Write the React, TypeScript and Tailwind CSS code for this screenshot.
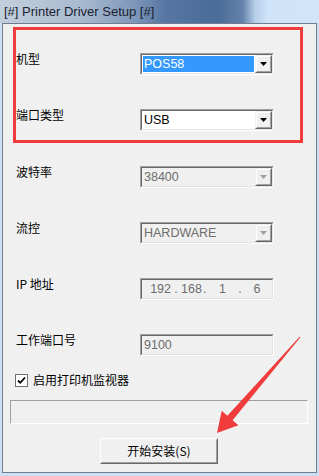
import React from 'react';

const latin = "font-['Liberation_Sans',Arial,sans-serif]";
const cjk = "font-['Noto_Sans_CJK_SC','Liberation_Sans',sans-serif]";

const Arrow = ({ disabled }: { disabled?: boolean }) => (
  <svg width="7" height="4" viewBox="0 0 7 4">
    <path d="M0 0h7L3.5 4z" fill={disabled ? '#a0a0a0' : '#000'} />
  </svg>
);

// classic sunken 3D edge
const Sunken = ({ className, children }: { className?: string; children: React.ReactNode }) => (
  <div className={`border-t-[#a0a0a0] border-l-[#a0a0a0] border-b-white border-r-white border ${className ?? ''}`}>
    <div className="h-full w-full border border-t-[#696969] border-l-[#696969] border-b-[#e3e3e3] border-r-[#e3e3e3]">
      {children}
    </div>
  </div>
);

const Combo = ({ value, selected, disabled }: { value: string; selected?: boolean; disabled?: boolean }) => (
  <Sunken className="w-[134px] h-[22px]">
    <div className={`flex h-full ${disabled ? 'bg-[#f0f0f0]' : 'bg-white'}`}>
      <div className="flex-1 p-[1px]">
        <div
          className={`h-full pl-[1px] flex items-center text-[12.5px] ${latin} ${
            selected ? 'bg-[#3399ff] text-white' : disabled ? 'text-[#6d6d6d]' : 'text-black'
          }`}
        >
          {value}
        </div>
      </div>
      <div className="w-[17px] h-full border border-t-[#f0f0f0] border-l-[#f0f0f0] border-b-[#696969] border-r-[#696969] bg-[#f0f0f0]">
        <div className="h-full w-full border border-t-white border-l-white border-b-[#a0a0a0] border-r-[#a0a0a0] flex items-center justify-center">
          <Arrow disabled={disabled} />
        </div>
      </div>
    </div>
  </Sunken>
);

const Row = ({ label, className, children }: { label: string; className?: string; children: React.ReactNode }) => (
  <div className={`flex items-start h-[22px] ${className ?? ''}`}>
    <div className={`w-[124px] text-[12px] leading-[12px] text-black ${cjk}`}>{label}</div>
    {children}
  </div>
);

export default function App() {
  return (
    <div className="relative w-[319px] h-[476px] overflow-hidden bg-[#cddff3]">
      {/* Title bar */}
      <div className="h-[23px] flex items-center pl-[4px] bg-[linear-gradient(90deg,#c2cfdd_0%,#a9bbd0_25%,#7f98ba_42%,#5675a2_52%,#4b6b99_68%,#6381aa_76%,#b7cfea_80%,#cfe4f9_84%,#d2e6fa_100%)]">
        <span className={`text-[13px] leading-[13px] text-[#1b2230] ${latin}`}>[#] Printer Driver Setup [#]</span>
      </div>

      {/* Client area */}
      <div className="ml-[2px] w-[315px] h-[450px] border border-[#6f7d8e] bg-[#f0f0f0]">
        <div className="pl-[13px] pt-[29px]">
          <Row label="机型">
            <Combo value="POS58" selected />
          </Row>
          <Row label="端口类型" className="mt-[34px]">
            <Combo value="USB" />
          </Row>
          <Row label="波特率" className="mt-[35px]">
            <Combo value="38400" disabled />
          </Row>
          <Row label="流控" className="mt-[34px]">
            <Combo value="HARDWARE" disabled />
          </Row>
          <Row label="IP 地址" className="mt-[34px]">
            <Sunken className="w-[134px] h-[22px]">
              <div className={`flex items-center h-full text-[12.5px] text-[#6d6d6d] ${latin}`}>
                <span className="w-[29px] text-right">192</span>
                <span className="w-[10px] text-center">.</span>
                <span className="w-[22px] text-left">168</span>
                <span className="w-[6px] text-left">.</span>
                <span className="w-[27px] text-center">1</span>
                <span className="w-[8px] text-center">.</span>
                <span className="w-[26px] text-center">6</span>
              </div>
            </Sunken>
          </Row>
          <Row label="工作端口号" className="mt-[34px]">
            <Sunken className="w-[134px] h-[22px]">
              <div className={`h-full pl-[2px] flex items-center text-[12.5px] text-[#6d6d6d] ${latin}`}>9100</div>
            </Sunken>
          </Row>
        </div>

        {/* Checkbox */}
        <div className="flex items-start mt-[18px] pl-[12px]">
          <div className="w-[13px] h-[13px] border border-[#707070] bg-white flex items-center justify-center">
            <svg width="9" height="9" viewBox="0 0 9 9">
              <path d="M1 4.5l2.3 2.3L8 1.5" stroke="#000" strokeWidth="1.8" fill="none" />
            </svg>
          </div>
          <span className={`ml-[5px] text-[12px] leading-[12px] text-black ${cjk}`}>启用打印机监视器</span>
        </div>

        {/* Status box */}
        <div className="ml-[7px] mt-[13px] w-[298px] h-[24px] border border-t-[#a0a0a0] border-l-[#a0a0a0] border-b-white border-r-white" />

        {/* Install button */}
        <div className="ml-[97px] mt-[14px] w-[118px] h-[26px] border border-t-white border-l-white border-b-[#696969] border-r-[#696969] bg-[#f0f0f0]">
          <div className="h-full w-full border border-t-[#f0f0f0] border-l-[#f0f0f0] border-b-[#a0a0a0] border-r-[#a0a0a0] flex items-center justify-center">
            <span className={`text-[12px] leading-[12px] text-black ${cjk}`}>开始安装(S)</span>
          </div>
        </div>
      </div>

      {/* Annotation: red frame */}
      <div className="absolute left-[13px] top-[27px] w-[290px] h-[116px] border-[3px] border-[#f23b3b] pointer-events-none" />

      {/* Annotation: red arrow */}
      <svg className="absolute inset-0 pointer-events-none" width="319" height="476" viewBox="0 0 319 476">
        <polygon
          points="300.4,337.3 232.6,420.3 238.4,425.2 217,433 221.7,410.8 227.4,415.7 299.6,336.7"
          fill="#f03c3c"
        />
      </svg>
    </div>
  );
}
